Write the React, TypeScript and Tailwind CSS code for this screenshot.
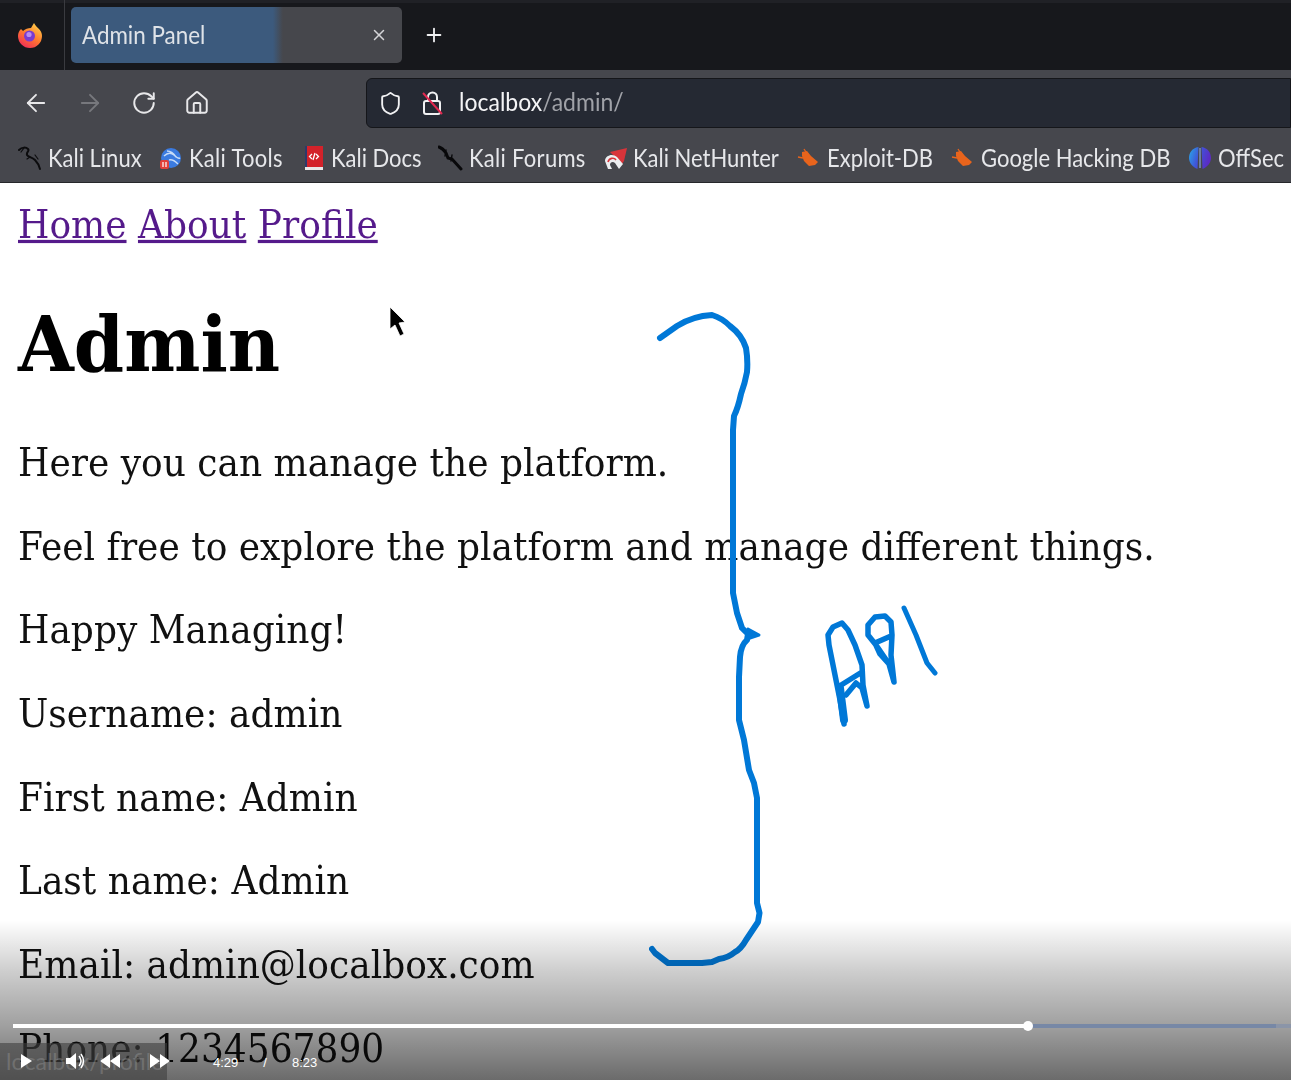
import { ArrowLeft, ArrowRight, House, Plus, RotateCw, Shield, X } from "lucide-react";
import type { ReactNode } from "react";

const Dragon = () => (
  <svg viewBox="0 0 24 26" className="h-[26px] w-6 shrink-0" fill="none" stroke="#0c0c0e" strokeWidth="2" strokeLinecap="round">
    <path d="M1 5c3-3 7-3 9-1 2 2-2 3-1 6 1 2 5 2 8 5 2 2 4 5 5 9" />
    <path d="M6 3l-3 4M12 12l-3 2M17 10l3 4" strokeWidth="1.2" />
  </svg>
);

const KaliTools = () => (
  <svg viewBox="0 0 24 24" className="h-6 w-6 shrink-0">
    <circle cx="13" cy="12" r="10" fill="#3b7be0" />
    <path d="M6 10c4-4 8-3 10-1s4 4 6 3M9 5c4 0 7 3 9 6M11 14c3-1 6 1 9 4" fill="none" stroke="#c7dcf8" strokeWidth="1.4" />
    <rect x="2" y="14" width="9" height="9" rx="2" fill="#e0403a" />
    <path d="M5 16v5M8 16v5" stroke="#fff" strokeWidth="1.2" />
  </svg>
);

const KaliDocs = () => (
  <svg viewBox="0 0 20 26" className="h-[26px] w-5 shrink-0">
    <rect x="1" y="1" width="18" height="21" fill="#d3222a" />
    <rect x="1" y="1" width="2" height="21" fill="#2d3a6b" />
    <rect x="1" y="22" width="18" height="3" fill="#e8e8e8" />
    <path d="M8 9l-2.5 2.5L8 14M12 9l2.5 2.5L12 14M11 8l-2 7" fill="none" stroke="#fff" strokeWidth="1.3" />
  </svg>
);

const KaliForums = () => (
  <svg viewBox="0 0 25 26" className="h-[26px] w-[25px] shrink-0" fill="none" stroke="#08080a" strokeLinecap="round">
    <path d="M1 2c3 1 5 3 7 6l2 5 4 1 9 10" strokeWidth="3" />
    <path d="M8 5l-1 6M14 10l-1 6" strokeWidth="1.4" />
  </svg>
);

const NetHunter = () => (
  <svg viewBox="0 0 24 24" className="h-6 w-6 shrink-0">
    <path d="M6 6L23 2L20 15L18 18Z" fill="#d8343a" />
    <path d="M1 15c0-6 8-8 12-4l6 7-4 5-4-6c-2-2-5-1-5 2l2 4H4z" fill="#eceef0" />
    <path d="M4 16c1-4 6-5 8-2" fill="none" stroke="#d8343a" strokeWidth="1.6" />
  </svg>
);

const Bug = () => (
  <svg viewBox="0 0 22 24" className="h-6 w-[22px] shrink-0">
    <path d="M5 6l5-1 4 5 7 6-3 3-6 1-5-5-2-5z" fill="#e8641c" />
    <path d="M1 11l5 1M7 3l2 3" stroke="#e8641c" strokeWidth="1.3" />
  </svg>
);

const OffSec = () => (
  <svg viewBox="0 0 24 24" className="h-6 w-6 shrink-0">
    <defs>
      <linearGradient id="offsec" x1="0" y1="0" x2="1" y2="0.3">
        <stop offset="0" stopColor="#29a8e8" />
        <stop offset="0.5" stopColor="#3f55d8" />
        <stop offset="1" stopColor="#5b2bc4" />
      </linearGradient>
    </defs>
    <path d="M10.5 1C4 2 1 7 1 12c0 5 4 9 8.5 11zM13.5 1C20 2 23 7 23 12c0 5-4 9-8.5 11z" fill="url(#offsec)" />
    <path d="M12 2v20" stroke="#7a8fc0" strokeWidth="1.5" />
  </svg>
);

const bookmarks: { label: string; icon: ReactNode; pad: string; text?: string }[] = [
  { label: "Kali Linux", icon: <Dragon />, pad: "w-[140px] gap-[6px]" },
  { label: "Kali Tools", icon: <KaliTools />, pad: "w-[146px] gap-[7px]", text: "tracking-[0.3px]" },
  { label: "Kali Docs", icon: <KaliDocs />, pad: "w-[134px] gap-[7px]" },
  { label: "Kali Forums", icon: <KaliForums />, pad: "w-[166px] gap-[6px]", text: "tracking-[0.3px]" },
  { label: "Kali NetHunter", icon: <NetHunter />, pad: "w-[193px] gap-[5px]" },
  { label: "Exploit-DB", icon: <Bug />, pad: "w-[154px] gap-[8px]" },
  { label: "Google Hacking DB", icon: <Bug />, pad: "w-[237px] gap-[8px]" },
  { label: "OffSec", icon: <OffSec />, pad: "gap-[6px]" },
];

const lines = [
  "Here you can manage the platform.",
  "Feel free to explore the platform and manage different things.",
  "Happy Managing!",
  "Username: admin",
  "First name: Admin",
  "Last name: Admin",
  "Email: admin@localbox.com",
  "Phone: 1234567890",
];

function Firefox() {
  return (
    <svg viewBox="0 0 26 26" className="h-[26px] w-[26px] shrink-0">
      <defs>
        <linearGradient id="fox" x1="0.8" y1="0" x2="0.2" y2="1">
          <stop offset="0" stopColor="#ffd24a" />
          <stop offset="0.5" stopColor="#ff7a2e" />
          <stop offset="1" stopColor="#f0285a" />
        </linearGradient>
      </defs>
      <path d="M17 1c1 2 2 3 4 5 3 3 4 5 4 8a12 12 0 0 1-24 0c0-3 1-5 3-7l2 2c2-2 5-3 8-3 1-2 2-3 3-5z" fill="url(#fox)" />
      <circle cx="12.5" cy="14" r="5.5" fill="#7a3bd0" />
      <circle cx="12" cy="12.5" r="2.6" fill="#b98cf0" />
    </svg>
  );
}

function BrokenLock() {
  return (
    <svg viewBox="0 0 22 26" className="h-[26px] w-[22px] shrink-0" fill="none">
      <rect x="2" y="11" width="16" height="13" rx="2" stroke="#f1f1f3" strokeWidth="2" />
      <path d="M6 11V7a4.5 4.5 0 0 1 9 0v4" stroke="#f1f1f3" strokeWidth="2" />
      <path d="M1 3l19 21" stroke="#e22850" strokeWidth="2" />
    </svg>
  );
}

function Annotation() {
  return (
    <svg viewBox="0 0 1291 1080" className="pointer-events-none absolute inset-0 h-[1080px] w-[1291px] blur-[0.3px]" fill="none" stroke="#0078d7" strokeLinecap="round" strokeLinejoin="round">
      <path
        strokeWidth="6"
        d="M660 338 L677 326 Q693 316 712 315 Q722 318 730 326 Q742 335 746 348 Q748 360 747 372 Q745 383 741 394 Q738 408 734 416 L733 430 L733 593 L737 613 L742 628 L748 634 L747 640 Q741 645 740 657 L739 677 L739 720 L744 740 L749 770 L754 783 L757 798 L757 903 L759.5 913 L758 922 L746 940 Q741 949 735 952 Q728 958 719 959 L712 962 L702 963 L668 963 L655 953 L652 949"
      />
      <path d="M748 629 L759 635 L747 639 Z" fill="#0078d7" strokeWidth="3" />
      <path
        strokeWidth="5.5"
        d="M844 724 L840 700 L836 680 L829 645 L828 635 L833 627 L842 623 L848 630 L855 645 L862 665 L863 685 L867 706 L862 688 L856 683 L846 695 M838 687 L862 672"
      />
      <path d="M840 688 L844 720" strokeWidth="8" />
      <path
        strokeWidth="5.5"
        d="M894 682 L889 664 L876 645 L868 635 L868 625 L875 617 L885 616 L891 622 L892 635 L891 655 L894 682 M891 636 L875 643 L880 654 L889 664"
      />
      <path strokeWidth="5" d="M904 608 L916 635 L927 663 L935 673" />
    </svg>
  );
}

export default function App() {
  return (
    <div className="relative h-[1080px] w-[1291px] overflow-hidden bg-white">
      <div className="font-['Lato',sans-serif] blur-[0.5px]">
        {/* Tab strip */}
        <div className="flex h-[70px] items-center bg-[linear-gradient(180deg,#202126_0px,#202126_3px,#17181c_3px)]">
          <div className="flex h-full w-[65px] items-center justify-center border-r border-[#3a3b40] pr-[4px]">
            <Firefox />
          </div>
          <div className="ml-[6px] flex h-[56px] w-[331px] items-center justify-between rounded-[5px] bg-[linear-gradient(90deg,#3c5a7d_0%,#3c5a7d_61%,#46474c_64%)] pl-[11px] pr-[14px]">
            <span className="inline-block scale-y-[1.12] text-[22.4px] text-[#dfe3e8]">Admin Panel</span>
            <X size={18} className="text-[#d5d5d8]" />
          </div>
          <Plus size={22} className="ml-[21px] text-[#f0f0f2]" />
        </div>

        {/* Toolbar */}
        <div className="flex h-[66px] items-center bg-[#46474d] pl-[22px]">
          <ArrowLeft size={28} strokeWidth={1.6} className="text-[#e8e8ea]" />
          <ArrowRight size={28} strokeWidth={1.6} className="ml-[26px] text-[#77787d]" />
          <RotateCw size={26} strokeWidth={1.8} className="ml-[27px] text-[#e8e8ea]" />
          <House size={26} strokeWidth={1.8} className="ml-[27px] text-[#e8e8ea]" />
          <div className="ml-[156px] flex h-[50px] flex-1 items-center rounded-l-[6px] border border-[#15161a] bg-[#252933] pl-[11px]">
            <Shield size={25} strokeWidth={1.8} className="text-[#f1f1f3]" />
            <div className="ml-[19px]">
              <BrokenLock />
            </div>
            <span className="ml-[15px] -mt-[3px] inline-block scale-y-[1.12] text-[23px] text-[#f4f4f6]">
              localbox<span className="text-[#a0a2a8]">/admin/</span>
            </span>
          </div>
        </div>

        {/* Bookmarks */}
        <div className="flex h-[47px] items-center whitespace-nowrap border-b border-[#26272b] bg-[#46474d] pb-[3px] pl-[18px]">
          {bookmarks.map((b) => (
            <div key={b.label} className={`flex shrink-0 items-center ${b.pad}`}>
              {b.icon}
              <span className={`inline-block scale-y-[1.12] text-[22px] text-[#e6e7ea] ${b.text ?? ""}`}>{b.label}</span>
            </div>
          ))}
        </div>
      </div>

      {/* Page body, the recording is stretched a little vertically */}
      <div className="origin-top-left scale-y-[1.073] p-[18px] font-['DejaVu_Serif',serif] text-[36px] leading-[42px] text-[#111] blur-[0.4px]">
        <nav className="text-[#551a8b]">
          <a href="#home" className="underline">Home</a> <a href="#about" className="underline">About</a>{" "}
          <a href="#profile" className="underline">Profile</a>
        </nav>
        <h1 className="my-[48px] text-[72px] leading-[84px] font-bold text-black">Admin</h1>
        <div className="flex flex-col gap-[36px] whitespace-nowrap">
          {lines.map((l) => (
            <p key={l}>{l}</p>
          ))}
        </div>
      </div>

      <Annotation />

      {/* Mouse pointer */}
      <svg viewBox="0 0 20 34" className="absolute left-[387px] top-[305px] h-[34px] w-[20px] blur-[0.6px]">
        <path d="M3 2 L3 24 L8 20 L13 31 L17 29 L12 18 L18 17 Z" fill="#000" stroke="#fff" strokeWidth="0.8" />
      </svg>

      {/* Player chrome */}
      <div className="absolute inset-x-0 bottom-0 h-[160px] bg-[linear-gradient(180deg,rgba(0,0,0,0)_0%,rgba(0,0,0,0.2)_33%,rgba(0,0,0,0.37)_65%,rgba(0,0,0,0.58)_100%)]" />
      <div className="absolute bottom-0 left-0 flex h-[37px] w-[167px] items-center bg-[#3f3f3f]/60 pl-[6px] font-['Lato',sans-serif] text-[23px] text-[#9a9a9a]/40">
        localbox/profile
      </div>
      <div className="absolute inset-x-0 bottom-0 h-[58px] font-['Liberation_Sans',sans-serif] text-[13px] text-white">
        <div className="absolute left-[13px] right-0 top-[2px] h-[4px] bg-[linear-gradient(90deg,#fff_0%,#fff_79.6%,#7788a6_79.6%,#7788a6_98.8%,#8b95a8_98.8%)]" />
        <div className="absolute left-[1023px] top-[-1px] h-[10px] w-[10px] rounded-full bg-white" />
        <svg viewBox="0 0 170 24" className="absolute left-[10px] top-[27px] h-[24px] w-[170px]" fill="#fff">
          <path d="M11 5 L22 12 L11 19 Z" />
          <path d="M56 9 H60 L66 4 V20 L60 15 H56 Z" />
          <path d="M69 7 Q73 12 69 17 M71 5 Q76 12 71 19" fill="none" stroke="#fff" strokeWidth="1.5" />
          <path d="M100 5 V19 L90 12 Z M110 5 V19 L100 12 Z" />
          <path d="M140 5 V19 L150 12 Z M150 5 V19 L160 12 Z" />
        </svg>
        <div className="absolute left-[213px] top-[31px] flex">
          <span>4:29</span>
          <span className="ml-[25px]">/</span>
          <span className="ml-[25px]">8:23</span>
        </div>
      </div>
    </div>
  );
}
